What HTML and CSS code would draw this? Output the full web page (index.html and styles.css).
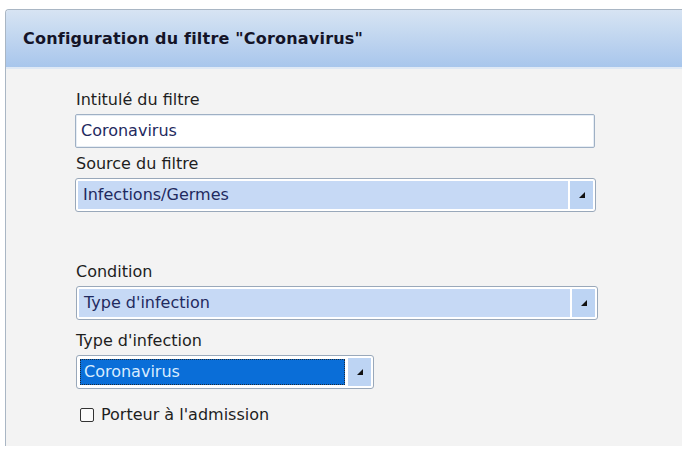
FILE: index.html
```html
<!DOCTYPE html>
<html lang="fr">
<head>
<meta charset="utf-8">
<link rel="stylesheet" href="styles.css">
</head>
<body>
<div class="panel">
  <div class="header"><h1 class="title">Configuration du filtre "Coronavirus"</h1></div>
  <div class="body">
    <div class="form">
      <div class="label">Intitulé du filtre</div>
      <div class="input">Coronavirus</div>
      <div class="label">Source du filtre</div>
      <div class="select wide">
        <div class="value">Infections/Germes</div>
        <div class="btn"><span class="tri"></span></div>
      </div>
      <div class="spacer"></div>
      <div class="label">Condition</div>
      <div class="select wide2">
        <div class="value">Type d'infection</div>
        <div class="btn"><span class="tri"></span></div>
      </div>
      <div class="label">Type d'infection</div>
      <div class="select narrow">
        <div class="value focused"><span>Coronavirus</span></div>
        <div class="btn"><span class="tri"></span></div>
      </div>
      <label class="check"><span class="box"></span>Porteur à l'admission</label>
    </div>
  </div>
</div>
</body>
</html>
```
FILE: styles.css
```css
html, body {
  margin: 0;
  padding: 0;
  background: #ffffff;
  width: 682px;
  height: 451px;
  overflow: hidden;
  font-family: "DejaVu Sans", sans-serif;
}
.panel {
  margin: 9px 0 0 5px;
  width: 700px;
  height: 437px;
  border: 1px solid #a9b6c4;
  border-right: none;
  border-bottom: none;
  border-top-left-radius: 4px;
  background: #f3f3f3;
  display: flex;
  flex-direction: column;
  box-sizing: border-box;
}
.header {
  height: 59px;
  background: linear-gradient(#d7e4f3, #a8c6ec);
  border-bottom: 2px solid #dfe9f5;
  border-top-left-radius: 3px;
  display: flex;
  align-items: center;
  padding-left: 17px;
  box-sizing: border-box;
}
.title {
  margin: 0;
  font-size: 16px;
  font-weight: bold;
  color: #141428;
  letter-spacing: 0.2px;
}
.body {
  flex: 1;
  padding: 18px 0 0 69px;
}
.form {
  display: flex;
  flex-direction: column;
  align-items: flex-start;
}
.label {
  font-size: 16px;
  color: #1e1e1e;
  height: 27px;
  line-height: 25px;
  padding-left: 1px;
}
.input {
  width: 520px;
  height: 34px;
  box-sizing: border-box;
  border: 1px solid #9fb0c4;
  border-radius: 2px;
  background: #ffffff;
  box-shadow: inset 0 0 0 1px #e6edf5;
  font-size: 16px;
  color: #1f2a60;
  padding-left: 5px;
  line-height: 32px;
  margin-bottom: 3px;
}
.select {
  height: 34px;
  box-sizing: border-box;
  border: 1px solid #99a8ba;
  border-radius: 3px;
  background: #ffffff;
  padding: 2px;
  display: flex;
  margin-bottom: 4px;
}
.wide { width: 521px; }
.wide2 { width: 522px; margin-left: 1px; margin-bottom: 8px; }
.narrow { width: 298px; margin-left: 1px; }
.value {
  flex: 1;
  background: #c6d9f5;
  font-size: 16px;
  color: #1f2a60;
  padding-left: 5px;
  line-height: 28px;
}
.value.focused {
  background: #ffffff;
  padding: 1px;
}
.value.focused span {
  display: block;
  height: 100%;
  box-sizing: border-box;
  background: #0a6ed8;
  color: #d8ecff;
  border: 1px dotted #1d2a3a;
  padding-left: 3px;
  line-height: 24px;
}
.btn {
  width: 23px;
  margin-left: 2px;
  background: #bdd4f3;
  display: flex;
  align-items: center;
  justify-content: center;
}
.tri {
  width: 0;
  height: 0;
  border-left: 6px solid transparent;
  border-bottom: 6px solid #111111;
}
.spacer { height: 43px; }
.check {
  display: flex;
  align-items: center;
  font-size: 16px;
  color: #1e1e1e;
  margin: 12px 0 0 5px;
}
.box {
  width: 12px;
  height: 12px;
  border: 1px solid #333333;
  border-radius: 2px;
  background: #fafafa;
  margin-right: 7px;
}
```
